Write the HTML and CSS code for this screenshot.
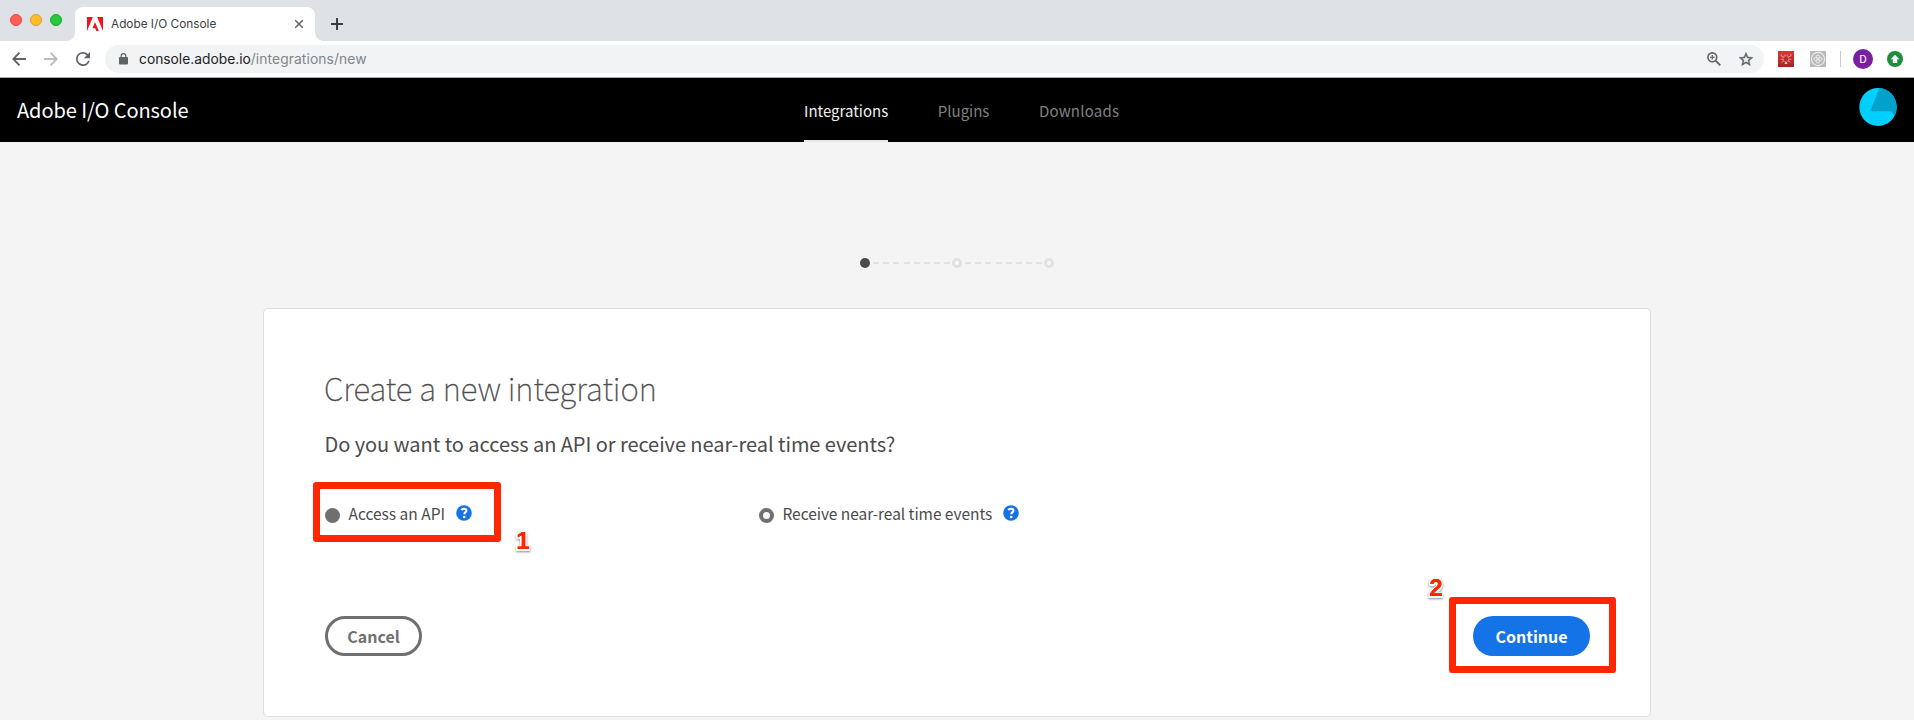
FILE: index.html
```html
<!DOCTYPE html>
<html lang="en">
<head>
<meta charset="utf-8">
<title>Adobe I/O Console</title>
<link rel="stylesheet" href="styles.css">
</head>
<body>
<div class="tabstrip">
  <div class="lights"><i class="light red"></i><i class="light yellow"></i><i class="light green"></i></div>
  <div class="tab">
    <svg class="favicon" width="16" height="14" viewBox="0 0 16 14"><path fill="#f0141e" d="M0 0h5.9L0 14zM10.1 0H16v14zM8 5.1l3.8 8.9H9.3l-1.1-2.8H5.4z"/></svg>
    <span class="tab-title">Adobe I/O Console</span>
    <svg class="tab-close" width="10" height="10" viewBox="0 0 10 10"><path d="M1.2 1.2l7.6 7.6M8.8 1.2L1.2 8.8" stroke="#5f6368" stroke-width="1.5"/></svg>
  </div>
  <svg class="new-tab" width="12" height="12" viewBox="0 0 12 12"><path d="M6 0v12M0 6h12" stroke="#3c4043" stroke-width="2"/></svg>
</div>
<div class="toolbar">
  <div class="nav-icons">
    <svg width="14" height="14" viewBox="0 0 14 14" fill="none" stroke="#5f6368" stroke-width="1.9"><path d="M14 7H1.5M7.5.7L1.3 7l6.2 6.3"/></svg>
    <svg width="14" height="14" viewBox="0 0 14 14" fill="none" stroke="#babcbe" stroke-width="1.9"><path d="M0 7h12.5M6.5.7L12.7 7l-6.2 6.3"/></svg>
    <svg width="14" height="14" viewBox="4 4 16 16"><path fill="#5f6368" d="M17.65 6.35A7.96 7.96 0 0 0 12 4a8 8 0 1 0 7.73 10h-2.08A6 6 0 1 1 12 6c1.66 0 3.14.69 4.22 1.78L13 11h7V4z"/></svg>
  </div>
  <div class="omnibox">
    <svg width="9" height="12" viewBox="0 0 9 12"><rect y="4" width="9" height="7.6" rx="1" fill="#5f6368"/><path d="M2.2 5V2.9a2.3 2.3 0 0 1 4.6 0V5" fill="none" stroke="#5f6368" stroke-width="1.2"/></svg>
    <span class="url">console.adobe.io<span class="path">/integrations/new</span></span>
    <svg class="zoom" width="14" height="14" viewBox="0 0 14 14" fill="none" stroke="#5f6368"><circle cx="5.3" cy="5.3" r="4.4" stroke-width="1.6"/><path d="M8.6 8.6l4.7 4.7" stroke-width="1.9"/><path d="M5.3 3.1v4.4M3.1 5.3h4.4" stroke-width="1.2"/></svg>
    <svg width="14" height="14" viewBox="2 2 20 19"><path fill="#5f6368" stroke="#5f6368" stroke-width=".6" d="M22 9.24l-7.19-.62L12 2 9.19 8.63 2 9.24l5.46 4.73L5.82 21 12 17.27 18.18 21l-1.63-7.03L22 9.24zM12 15.4l-3.76 2.27 1-4.28-3.32-2.88 4.38-.38L12 6.1l1.71 4.04 4.38.38-3.32 2.88 1 4.28L12 15.4z"/></svg>
  </div>
  <svg class="ext-red" width="16" height="16" viewBox="0 0 16 16"><defs><linearGradient id="r" x2="0" y2="1"><stop stop-color="#dc3530"/><stop offset="1" stop-color="#a02828"/></linearGradient></defs><path fill="url(#r)" d="M0 0h16v16H0z"/><ellipse cx="8" cy="7.8" rx="2.8" ry="3.2" fill="none" stroke="#e58a86" stroke-width=".7"/><path d="M5.7 6L3.2 5V3M5.2 8.3H2.7M5.8 10l-2.3 1.3M10.3 6l2.5-1V3M10.8 8.3h2.5M10.2 10l2.3 1.3M6.8 4.5L6 3.3M9.2 4.5l.8-1.2" fill="none" stroke="#f1b7b4" stroke-width=".7"/><path d="M6.4 12.8L8 10.8l1.6 2z" fill="#fff"/></svg>
  <svg class="ext-grey" width="16" height="16" viewBox="0 0 16 16"><path fill="#bababa" d="M0 0h16v16H0z"/><g fill="none" stroke="#ededed"><circle cx="8" cy="8" r="6.6" stroke-width="1.1"/><circle cx="8" cy="5.7" r="1.7"/><circle cx="8" cy="10.3" r="1.7"/><circle cx="5.7" cy="8" r="1.7"/><circle cx="10.3" cy="8" r="1.7"/></g></svg>
  <i class="divider"></i>
  <span class="profile">D</span>
  <svg class="update" width="16" height="16" viewBox="0 0 16 16"><circle cx="8" cy="8" r="8" fill="#1e8e3e"/><path fill="#fff" d="M8 3.8l4.3 4.5H10.2V12H5.8V8.3H3.7z"/></svg>
</div>
<header class="header">
  <div class="brand">Adobe I/O Console</div>
  <nav class="menu">
    <a class="item active">Integrations</a><a class="item">Plugins</a><a class="item wide">Downloads</a>
  </nav>
  <svg class="avatar" width="38" height="38" viewBox="0 0 38 38"><defs><clipPath id="c"><ellipse cx="19" cy="19" rx="18.7" ry="19"/></clipPath></defs><g clip-path="url(#c)"><path fill="#00d0ff" d="M0 0h38v38H0z"/><path fill="#00a1cb" d="M20.5 0L11 23.3h21.5l3 4.7H38V0z"/></g></svg>
</header>
<main class="page">
  <div class="stepper"><i class="dot current"></i><i class="dash"></i><i class="dot"></i><i class="dash"></i><i class="dot"></i></div>
  <section class="card">
    <h1 class="title">Create a new integration</h1>
    <h2 class="question">Do you want to access an API or receive near-real time events?</h2>
    <div class="options">
      <label class="option">
        <i class="radio checked"></i><span>Access an API</span>
        <svg class="help" width="16" height="16" viewBox="0 0 16 16"><circle cx="8" cy="8" r="7.8" fill="#1473e6"/><path d="M5.6 5.2Q5.9 3.7 8 3.7q2.4 0 2.4 1.9 0 1-.9 1.6-1.1.8-1.1 2.1" fill="none" stroke="#fff" stroke-width="2.1"/><circle cx="8.2" cy="12" r="1.35" fill="#fff"/></svg>
        <i class="mark mark-one"></i><b class="num num-one">1</b>
      </label>
      <label class="option">
        <i class="radio"></i><span class="events">Receive near-real time events</span>
        <svg class="help" width="16" height="16" viewBox="0 0 16 16"><circle cx="8" cy="8" r="7.8" fill="#1473e6"/><path d="M5.6 5.2Q5.9 3.7 8 3.7q2.4 0 2.4 1.9 0 1-.9 1.6-1.1.8-1.1 2.1" fill="none" stroke="#fff" stroke-width="2.1"/><circle cx="8.2" cy="12" r="1.35" fill="#fff"/></svg>
      </label>
    </div>
    <div class="actions">
      <button class="btn cancel">Cancel</button>
      <div class="primary"><button class="btn continue">Continue</button><i class="mark mark-two"></i><b class="num num-two">2</b></div>
    </div>
  </section>
</main>
</body>
</html>
```
FILE: styles.css
```css
* { box-sizing: border-box; }
body {
  margin: 0;
  height: 720px;
  overflow: hidden;
  background: #f4f4f4;
  font-family: "Noto Sans CJK SC", "Open Sans", sans-serif;
  color: #4b4b4b;
}
svg { display: block; flex: none; }

/* Browser chrome */
.tabstrip {
  display: flex;
  height: 41px;
  padding-top: 7px;
  background: #dee1e6;
  font-family: Inter, sans-serif;
}
.lights { display: flex; gap: 8px; width: 75px; padding: 7px 0 0 10px; }
.light { width: 12px; height: 12px; border-radius: 50%; border: 1px solid; }
.red { background: #ff5f57; border-color: #e2463f; }
.yellow { background: #ffbd2e; border-color: #e1a116; }
.green { background: #28c940; border-color: #12ac28; }
.tab {
  position: relative;
  display: flex;
  align-items: center;
  width: 240px;
  height: 34px;
  padding: 0 12px;
  border-radius: 8px 8px 0 0;
  background: #fff;
}
.tab::before, .tab::after {
  content: "";
  position: absolute;
  bottom: 0;
  width: 8px;
  height: 8px;
}
.tab::before { left: -8px; background: radial-gradient(circle at 0 0, transparent 7.5px, #fff 8px); }
.tab::after { right: -8px; background: radial-gradient(circle at 100% 0, transparent 7.5px, #fff 8px); }
.favicon { margin-right: 8px; }
.tab-title { flex: 1; font-size: 11.8px; line-height: 16px; color: #3c4043; }
.tab-close { margin-right: -1px; }
.new-tab { margin: 11px 0 0 16px; }
.toolbar {
  display: flex;
  align-items: center;
  height: 37px;
  padding: 0 11px 0 12px;
  border-bottom: 1px solid #a9aba9;
  background: #fff;
  font-family: Inter, sans-serif;
}
.nav-icons { display: flex; gap: 18px; width: 93px; }
.omnibox {
  display: flex;
  align-items: center;
  width: 1659px;
  height: 28px;
  padding: 0 11px 0 14px;
  border-radius: 14px;
  background: #f1f3f4;
}
.url { flex: 1; margin-left: 11px; font-size: 13.8px; line-height: 20px; color: #202124; }
.path { color: #80868b; letter-spacing: .1px; }
.zoom { margin-right: 18px; }
.ext-red { margin-left: 14px; }
.ext-grey { margin-left: 16px; }
.divider { width: 1px; height: 16px; margin-left: 14px; background: #c8cacc; }
.profile {
  width: 20px;
  height: 20px;
  margin: 0 14px 0 12px;
  border-radius: 50%;
  background: #7b1fa2;
  color: #fff;
  font: 400 11.5px/20px Roboto, sans-serif;
  text-align: center;
}

/* Application header */
.header {
  display: flex;
  justify-content: space-between;
  height: 64px;
  padding-left: 17px;
  padding-right: 17px;
  background: #000;
}
.brand { width: 787px; font-size: 20px; line-height: 64px; letter-spacing: -.07px; color: #fff; }
.menu { display: flex; flex: 1; gap: 49.5px; font-size: 15px; line-height: 65px; color: #808080; }
.item { height: 64px; }
.active { color: #f0f0f0; border-bottom: 2px solid #e8e8e8; }
.wide { letter-spacing: .2px; }
.avatar { margin-top: 10px; }

/* Page */
.page { display: flex; flex-direction: column; align-items: center; padding-top: 116px; }
.stepper { display: flex; align-items: center; height: 10px; }
.dot { width: 10px; height: 10px; border: 3px solid #e1e1e1; border-radius: 50%; background: #fafafa; }
.current { border: 0; background: #4b4b4b; }
.dash {
  width: 82px;
  height: 2px;
  background: repeating-linear-gradient(90deg, #e1e1e1 0 6px, transparent 6px 10.2px) 3px 0 / 79px 2px no-repeat;
}
.card {
  width: 1388px;
  height: 409px;
  margin-top: 40px;
  padding: 59px 60px 0 61px;
  border: 1px solid #dedede;
  border-radius: 5px;
  background: #fff;
}
.title {
  margin: 0 0 0 -1px;
  font-size: 31.2px;
  font-weight: 100;
  line-height: 40px;
  -webkit-text-stroke: .35px #4b4b4b;
}
.question { margin: 24px 0 0 -.5px; font-size: 20px; font-weight: 400; line-height: 24px; letter-spacing: -.05px; }
.options { display: flex; margin-top: 45px; }
.option { position: relative; display: flex; width: 434px; font-size: 15.5px; line-height: 24px; white-space: nowrap; }
.radio { width: 15px; height: 15px; margin: 7px 8.5px 0 0; border: 4px solid #707070; border-radius: 50%; background: #f7f7f7; }
.checked { background: #707070; }
.events { letter-spacing: -.05px; }
.help { margin: 4px 0 0 11px; }
.actions { display: flex; justify-content: space-between; margin-top: 91px; }
.btn {
  display: block;
  height: 40px;
  padding: 0;
  border: 0;
  border-radius: 20px;
  font: 700 16px/40px "Noto Sans CJK SC", "Open Sans", sans-serif;
}
.cancel { width: 97px; border: 3px solid #707070; background: #fff; color: #707070; line-height: 34px; }
.continue { width: 117px; background: #1473e6; color: #fff; }
.primary { position: relative; }

/* Annotations drawn over the page */
.mark { position: absolute; border: 7px solid #ff2600; border-radius: 3px; }
.mark-one { left: -12px; top: -19px; width: 188px; height: 60px; }
.mark-two { left: -24px; top: -19px; width: 167px; height: 76px; }
.num {
  position: absolute;
  color: #ff2600;
  font: 700 24px/24px "Liberation Sans", Arial, sans-serif;
  filter: drop-shadow(0 1.5px 1px rgba(0, 0, 0, .45));
  text-shadow: .5px 0 #ff2600, 1.5px 0 #fff, -1.5px 0 #fff, 0 1.5px #fff, 0 -1.5px #fff, 1.5px 1.5px #fff, -1.5px 1.5px #fff;
}
.num-one { left: 191px; top: 28px; }
.num-two { left: -44px; top: -40px; }
```
